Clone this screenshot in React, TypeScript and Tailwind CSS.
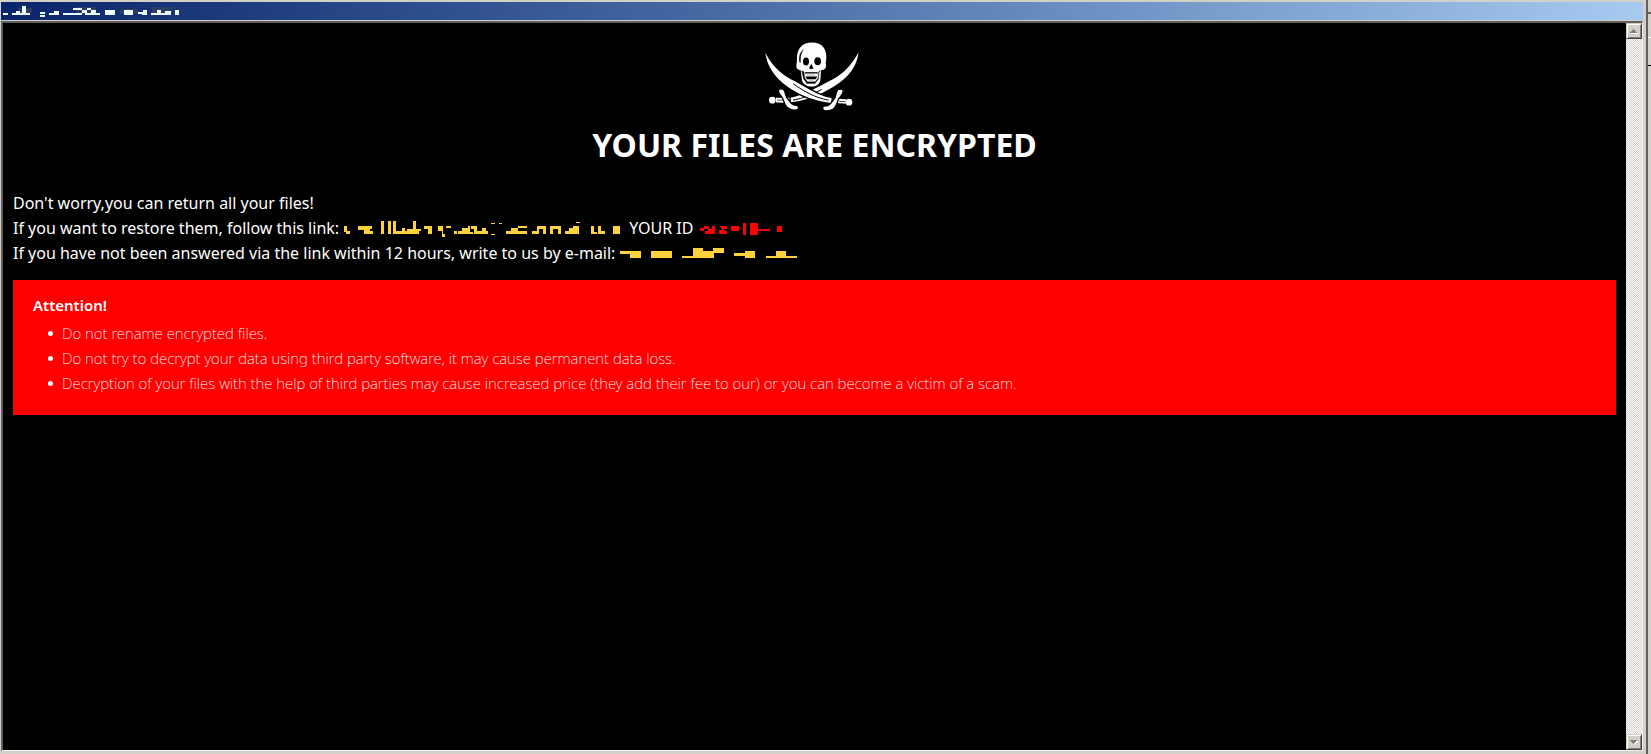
import { useRef } from 'react';

const notes = [
  'Do not rename encrypted files.',
  'Do not try to decrypt your data using third party software, it may cause permanent data loss.',
  'Decryption of your files with the help of third parties may cause increased price (they add their fee to our) or you can become a victim of a scam.',
];

// Pixelated strips: every path is a run of small blocks
const titleBlocks =
  'M3 13h5v2h-5z M12 13h4v-2h4v4h-8z M20 13h2v-7h4v7h4v2h-10z M40 12h5v2h-5z M40 15h5v2h-5z M49 13h5v-2h5v4h-10z M63 13h19v2h-19z M73 8h9v2h-9z M82 10h5v3h-5z M87 8h4v2h-4z M91 10h5v3h4v2h-15v-2h6z M105 10h10v5h-10z M124 10h9v5h-9z M138 12h5v-2h4v5h-5v-1h-4z M151 13h6v-3h4v3h4v-2h6v4h-20z M175 10h4v5h-4z';
const linkBlocks =
  'M7 6h3v5h3v3h-4v-2h-2z M21 6h14v3h-2v2h3v3h-9v-4h-6z M44 1h3v13h-3z M51 1h3v13h-3z M56 1h3v10h6v-3h3v3h2v-2h6v-8h3v8h5v2h-2v3h-26z M87 6h8v8h-4v-5h-4z M101 6h5v8h2v3h-3v-6h-4z M109 6h5v2h-5z M117 11h3v3h-3z M121 11h4v-3h6v-2h2v6h3v2h-15z M134 6h6v5h5v-3h4v3h2v3h-14v-5h-3z M154 3h4v1h-4z M162 3h3v1h-3z M154 14h4v1h-4z M169 11h5v-3h7v-2h9v2h-9v3h9v3h-21z M195 11h5v-5h9v8h-3v-5h-4v5h-7z M213 6h11v8h-3v-5h-5v5h-3z M228 11h4v-3h4v-2h6v8h-14z M239 2h4v1h-4z M254 6h3v6h3v2h-6z M261 6h3v5h4v3h-7z M276 6h7v8h-7z';
const idBlocks =
  'M0 8h4v3h-4z M4 6h5v3h3v-3h3v8h-10v-3h3v-2h-4z M20 6h7v3h-3v2h3v3h-8v-4h3z M31 6h8v5h-8z M43 3h3v12h-3z M50 3h8v6h12v2h-12v4h-8z M77 6h5v6h-5z';
const mailBlocks =
  'M0 0h21v7h-11v-4h-10z M31 0h21v7h-21z M62 5h11v-8h10v3h10v-3h11v5h-10v5h-32z M114 2h11v-2h10v7h-10v-2h-11z M146 5h10v-5h10v5h11v2h-31z';

function JollyRoger() {
  return (
    <svg viewBox="45 38 282 206" className="h-[69px] w-[94px]" aria-hidden="true">
      {/* skull */}
      <path d="M141 88C140 56 158 39 186 39c28 0 45 17 43 48l-2 15c4 14-3 19-14 20l-2 30c-3 13-12 19-26 19s-25-6-29-18l-4-31c-11-1-15-8-12-20z" fill="#fff" />
      <path d="M160 60c-12 11-15 27-10 40 3-1 1-12 2-18 1-8 4-15 8-22z" stroke="#000" strokeWidth="1" />
      <ellipse cx="168" cy="96" rx="9" ry="12" />
      <ellipse cx="203" cy="95" rx="10" ry="12" />
      <path d="M184 103l6 13-6 3-7-3z" />
      <path d="M155 124l7 3 2 18 8 12h24l8-11 2-19 5-3-4 5-2 20-10 13h-24l-10-13z" stroke="#000" strokeWidth="1" />
      <path d="M165 128h38v4h-38z" />
      <path d="M166 141h36l-5 8h-26z" />
      <path d="M174 134v7M180 134v7M186 134v7M192 134v7M180 150v5M187 150v5" stroke="#000" />

      {/* blade running from the upper right */}
      <g fill="#fff" stroke="#000" strokeWidth="4">
        <path d="M328 60C308 100 280 134 237 153C197 174 159 196 119 203v18c51-5 91-22 130-46C296 147 327 112 328 60z" />
        <path d="M120 202l-44 1v17l44 3z" />
        <path d="M85 183c2-8 16-6 19 2 3 8 3 16 8 22 8 8 12 20 24 20 14 1 13 15-1 15-27-1-31-18-36-33-3-9-14-16-14-26z" />
      </g>
      <circle cx="67" cy="212" r="10" fill="#fff" />
      <path d="M129 212c31-5 60-18 86-32" fill="none" stroke="#000" strokeWidth="3" />
      <path d="M81 212h17" stroke="#000" strokeWidth="2" />

      {/* blade running from the upper left */}
      <g fill="#fff" stroke="#000" strokeWidth="4">
        <path d="M43 60C61 98 91 134 134 153C174 174 206 198 248 204l-2 19C195 218 155 202 118 178C75 149 46 112 43 60z" />
        <path d="M247 205l43 2-1 18-43-3z" />
        <path d="M280 184c-2-8-18-6-20 2-3 8-2 16-8 23-8 8-12 21-24 20-14-1-13 15 1 15 28-1 30-18 36-33 4-10 15-15 15-27z" />
      </g>
      <circle cx="297" cy="218" r="10" fill="#fff" />
      <path d="M130 163c34 24 66 42 106 49" fill="none" stroke="#000" strokeWidth="3" />
      <path d="M268 216h18" stroke="#000" strokeWidth="2" />
    </svg>
  );
}

interface ScrollButtonProps {
  label: string;
  down?: boolean;
  onClick: () => void;
}

function ScrollButton({ label, down = false, onClick }: ScrollButtonProps) {
  return (
    <button
      type="button"
      aria-label={label}
      onClick={onClick}
      className="flex h-4 w-4 shrink-0 items-center justify-center border border-t-[#d4d0c8] border-r-[#404040] border-b-[#404040] border-l-[#d4d0c8] bg-[#d4d0c8] shadow-[inset_1px_1px_0_#fff,inset_-1px_-1px_0_#808080]"
    >
      <svg viewBox="0 0 8 5" className="h-[5px] w-2" shapeRendering="crispEdges" aria-hidden="true">
        {down && <path d="M2 1h6v1h-1v1h-1v1h-1v1h-1v-1h-1v-1h-1z" fill="#fff" />}
        <path d={down ? 'M0 0h7v1h-1v1h-1v1h-1v1h-1v-1h-1v-1h-1v-1h-1z' : 'M3 0h1v1h1v1h1v1h1v1h-7v-1h1v-1h1v-1h1z'} fill="#808080" />
        {!down && <path d="M1 4h7v1h-7z" fill="#fff" />}
      </svg>
    </button>
  );
}

export default function App() {
  const pageRef = useRef<HTMLDivElement>(null);

  const scrollPage = (amount: number) => {
    pageRef.current?.scrollBy({ top: amount });
  };

  return (
    <div className="flex h-screen overflow-hidden bg-[#d4d0c8] font-['Noto_Sans',sans-serif] text-white">
      <div className="flex min-w-0 flex-1 flex-col border-l border-[#d4d0c8] pt-0.5">
        {/* Title bar */}
        <header className="mr-[3px] h-[18px] shrink-0 bg-linear-to-r from-[#0a246a] to-[#a6caf0]">
          <svg viewBox="1 2 200 18" className="h-[18px] w-[200px]" shapeRendering="crispEdges" aria-hidden="true">
            <path d="M18 8h14v5h-14zM76 7h20v7h-20zM120 9h18v5h-18zM152 7h20v6h-20z" fill="#2c3c62" />
            <path d={titleBlocks} fill="#f0ffff" />
          </svg>
        </header>

        {/* Client area */}
        <div className="mt-px mr-[3px] mb-[3px] flex min-h-0 flex-1 border-t-2 border-r border-b border-l-2 border-t-[#606060] border-r-[#f4f2ee] border-b-[#f4f2ee] border-l-[#606060]">
          <main ref={pageRef} className="min-w-0 flex-1 overflow-hidden bg-black px-2.5 pt-[19px]">
            <div className="flex justify-center pr-1.5">
              <JollyRoger />
            </div>
            <h1 className="mt-3 text-center text-[32px] leading-[44px] font-bold">YOUR FILES ARE ENCRYPTED</h1>

            <div className="mt-6 text-[16px] leading-[25px]">
              <p>Don't worry,you can return all your files!</p>
              <p className="flex items-center whitespace-pre">
                If you want to restore them, follow this link:{' '}
                <svg viewBox="6 0 278 18" className="mr-2 h-[18px] w-[278px]" shapeRendering="crispEdges" aria-hidden="true">
                  <path d={linkBlocks} fill="#fdd23c" />
                </svg>
                YOUR ID{' '}
                <svg viewBox="0 0 82 18" className="ml-0.5 h-[18px] w-[82px]" shapeRendering="crispEdges" aria-hidden="true">
                  <path d={idBlocks} fill="#f00" />
                </svg>
              </p>
              <p className="flex items-center whitespace-pre">
                If you have not been answered via the link within 12 hours, write to us by e-mail:{' '}
                <svg viewBox="0 -6 178 18" className="h-[18px] w-[178px]" shapeRendering="crispEdges" aria-hidden="true">
                  <path d={mailBlocks} fill="#fdd23c" />
                </svg>
              </p>
            </div>

            <section className="mt-3.5 bg-[#f00] px-5 pt-[13px] pb-[19px] text-[15px] leading-[25px]">
              <h2 className="font-semibold">Attention!</h2>
              <ul className="mt-[3px] pl-[15px] font-extralight">
                {notes.map((note) => (
                  <li
                    key={note}
                    className="flex items-center before:mr-[9px] before:size-[5px] before:shrink-0 before:rounded-full before:bg-white"
                  >
                    {note}
                  </li>
                ))}
              </ul>
            </section>
          </main>

          {/* Scrollbar */}
          <div className="flex w-4 shrink-0 flex-col justify-between bg-[repeating-conic-gradient(#fff_0_25%,#d4d0c8_0_50%)] bg-[length:2px_2px]">
            <ScrollButton label="Scroll up" onClick={() => scrollPage(-40)} />
            <ScrollButton label="Scroll down" down onClick={() => scrollPage(40)} />
          </div>
        </div>
      </div>

      {/* Edge of the window behind */}
      <div className="flex w-[5px] shrink-0 flex-col border-l-2 border-[#606060]">
        <div className="h-3.5 border-b-2 border-[#606060]" />
        <div className="h-6 border-b border-white" />
        <div className="h-7 border-b border-black" />
      </div>
    </div>
  );
}
